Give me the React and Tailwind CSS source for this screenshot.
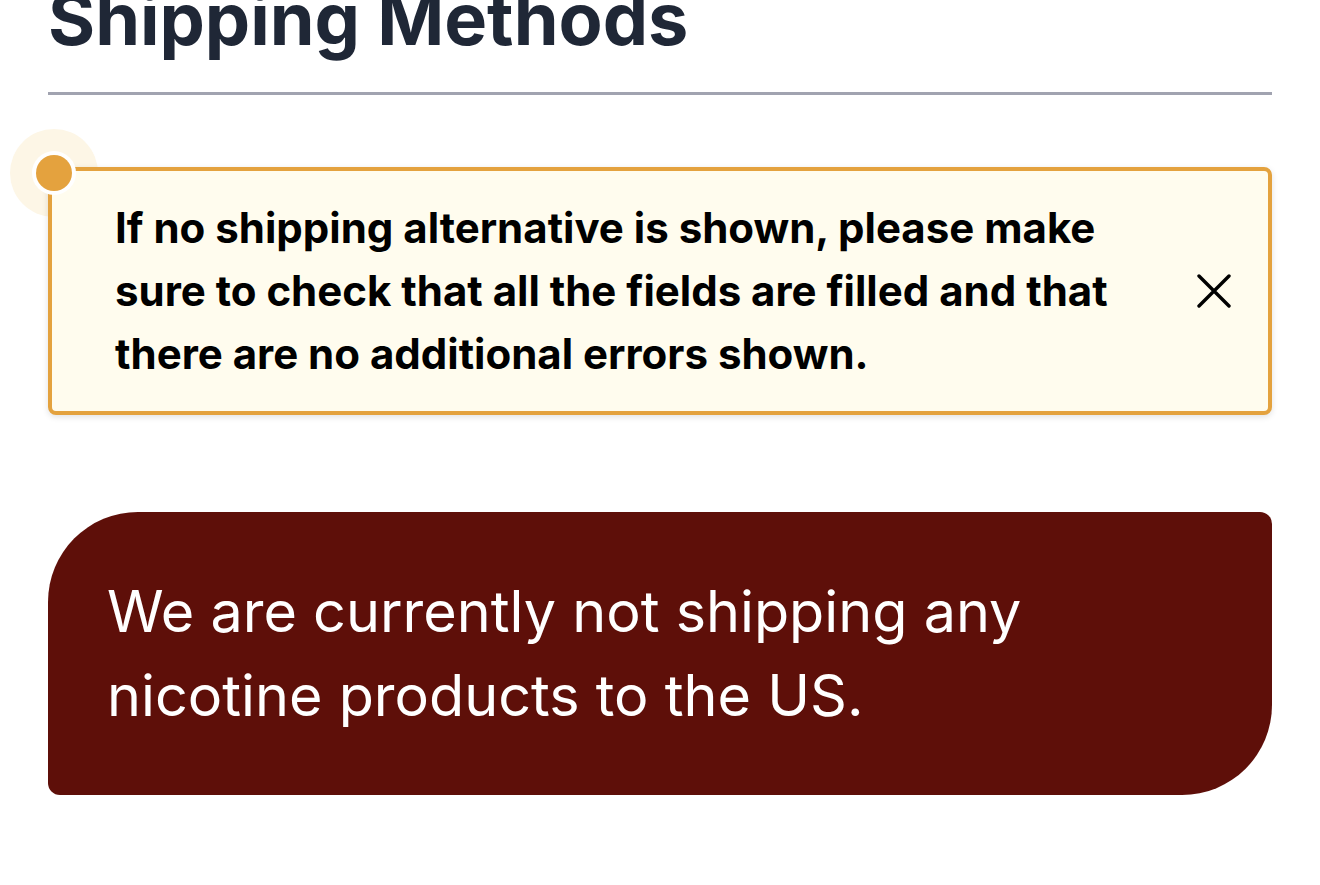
import React from "react";

export default function App() {
  return (
    <div className="min-h-[885px] bg-white px-12 overflow-hidden" style={{ fontFamily: "Inter, 'Noto Sans', sans-serif" }}>
      <h1 className="-mt-[25px] text-[72px] leading-[88px] font-bold text-[#1f2736]">Shipping Methods</h1>
      <div className="mt-[29px] h-[3px] bg-[#a1a3b0]" />
      <div className="relative mt-[72px]">
        <div className="absolute -left-[38px] -top-[38px] w-[88px] h-[88px] rounded-full bg-[#fdf6e6]" />
        <div className="relative h-[248px] rounded-[8px] border-4 border-[#e4a23e] bg-[#fffcee] shadow-[0_2px_6px_rgba(0,0,0,0.12)] flex items-center pl-[63px] pr-[37px]">
          <p className="flex-1 text-[42px] leading-[63px] font-bold text-black pb-[1px]">
            If no shipping alternative is shown, please make sure to check that all the fields are filled and that there are no additional errors shown.
          </p>
          <svg width="34" height="34" viewBox="0 0 34 34" className="shrink-0 ml-[40px]" fill="none" stroke="#000" strokeWidth="3.4" strokeLinecap="round">
            <path d="M2 2 L32 32 M32 2 L2 32" />
          </svg>
        </div>
        <div className="absolute -left-[16px] -top-[16px] w-[44px] h-[44px] rounded-full bg-white flex items-center justify-center">
          <div className="w-[36px] h-[36px] rounded-full bg-[#e4a23e]" />
        </div>
      </div>
      <div className="mt-[97px] h-[283px] bg-[#5e0f09] rounded-tl-[90px] rounded-tr-[12px] rounded-br-[90px] rounded-bl-[12px] pl-[59px] pr-[200px] flex items-center">
        <p className="text-[57.5px] leading-[84px] text-white pb-[2px]">
          We are currently not shipping any nicotine products to the US.
        </p>
      </div>
    </div>
  );
}
